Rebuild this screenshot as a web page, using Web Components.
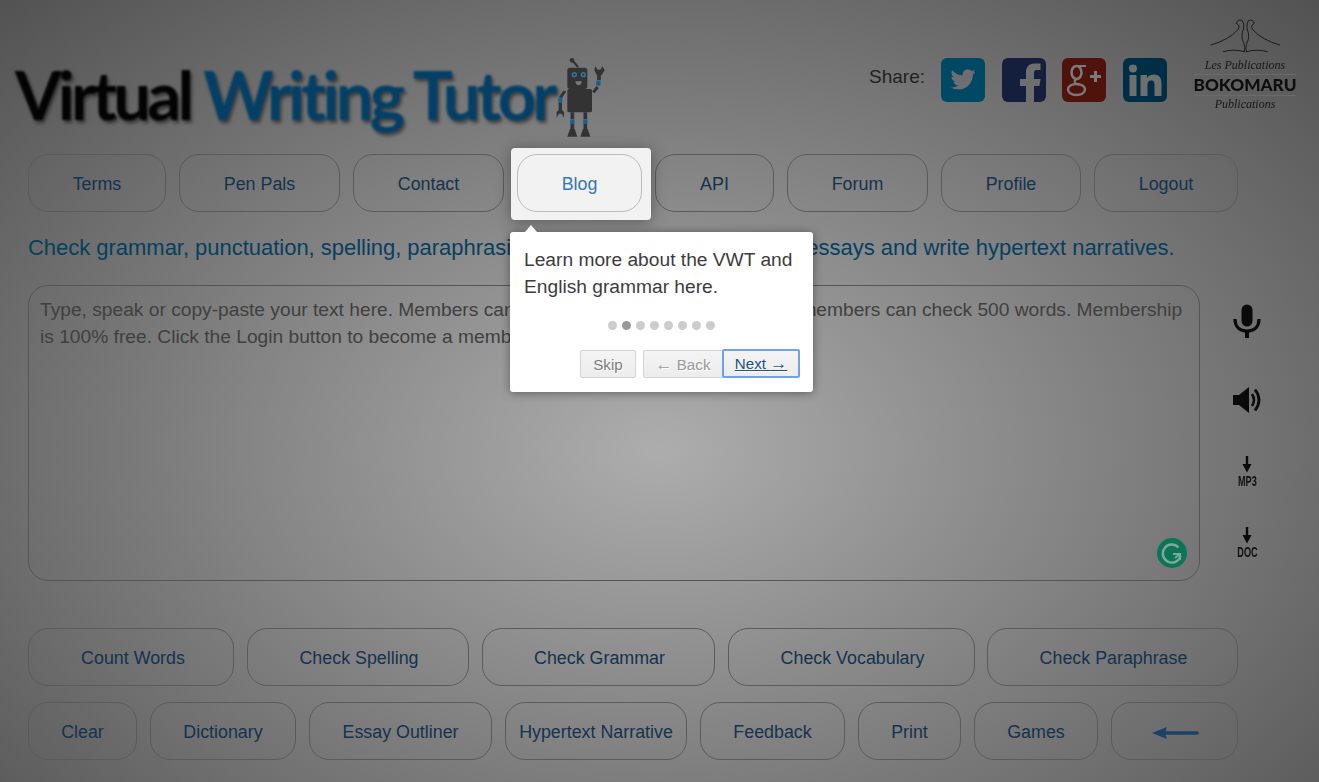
<!DOCTYPE html>
<html lang="en"><head><meta charset="utf-8"><title>Virtual Writing Tutor</title>
<style>
html,body{margin:0;padding:0;height:782px;overflow:hidden}
body{position:relative;width:1319px;font-family:"Liberation Sans",Arial,sans-serif;background:radial-gradient(ellipse 933px 636px at 659px 450px,#adadad 0,#525252 100%)}
.row{display:flex;gap:13px;padding-left:28px}
.gap16{margin-top:16px}
</style></head><body>
<vwt-header></vwt-header>
<div class="row">
<vwt-button style="--w:138px">Terms</vwt-button>
<vwt-button style="--w:161px">Pen Pals</vwt-button>
<vwt-button style="--w:151px">Contact</vwt-button>
<vwt-button style="--w:125px" active>Blog</vwt-button>
<vwt-button style="--w:119px">API</vwt-button>
<vwt-button style="--w:141px">Forum</vwt-button>
<vwt-button style="--w:140px">Profile</vwt-button>
<vwt-button style="--w:144px">Logout</vwt-button>
</div>
<vwt-tagline>Check grammar, punctuation, spelling, paraphrasing and vocabulary use. Study essays and write hypertext narratives.</vwt-tagline>
<vwt-workspace></vwt-workspace>
<div class="row" style="--pl:2px">
<vwt-button style="--w:206px;--pl:4px">Count Words</vwt-button>
<vwt-button style="--w:222px">Check Spelling</vwt-button>
<vwt-button style="--w:233px">Check Grammar</vwt-button>
<vwt-button style="--w:247px">Check Vocabulary</vwt-button>
<vwt-button style="--w:251px;margin-left:-1px">Check Paraphrase</vwt-button>
</div>
<div class="row gap16">
<vwt-button style="--w:109px">Clear</vwt-button>
<vwt-button style="--w:146px">Dictionary</vwt-button>
<vwt-button style="--w:183px">Essay Outliner</vwt-button>
<vwt-button style="--w:182px">Hypertext Narrative</vwt-button>
<vwt-button style="--w:145px">Feedback</vwt-button>
<vwt-button style="--w:103px">Print</vwt-button>
<vwt-button style="--w:124px">Games</vwt-button>
<vwt-button style="--w:127px"><svg width="48" height="16" viewBox="0 0 48 16" style="display:block;margin-top:2px;filter:blur(.4px)" aria-hidden="true"><path d="M13 8H46" stroke="#1c4169" stroke-width="3.500" stroke-linecap="round"/><path d="M1 8L16 2Q13 8 16 14Z" fill="#1c4169"/></svg></vwt-button>
</div>
<vwt-highlight></vwt-highlight>
<vwt-tooltip>Learn more about the VWT and English grammar here.</vwt-tooltip>
<script>
function def(name,html){customElements.define(name,class extends HTMLElement{constructor(){super();this.attachShadow({mode:'open'}).innerHTML=html;}});}

def('vwt-logo',`<style>
:host{display:flex;align-items:flex-start;margin:0 0 0 15px}
.t{font:700 67px/72px Lato,sans-serif;letter-spacing:-3.800px;white-space:nowrap;color:#030303;text-shadow:2px 3px 3px rgba(0,0,0,.45);filter:blur(.9px);margin-top:58px;height:90px;word-spacing:1px}
.b{color:#033f66}
svg{display:block;margin:55px 0 0 -4px;filter:blur(.7px)}
</style><div class="t">Virtual <span class="b">Writing Tutor</span></div>
<svg width="60" height="90" viewBox="0 0 180 270" aria-hidden="true">
<path d="M66 15L84 36" stroke="#333" stroke-width="6"/><circle cx="66" cy="16" r="7" fill="#333"/>
<path d="M52 46Q52 38 60 38H104Q112 38 112 46V94Q112 102 104 102H60Q52 102 52 94Z" fill="#333"/>
<circle cx="73" cy="59" r="8" fill="#35759f"/><circle cx="73" cy="59" r="3.500" fill="#333"/><circle cx="100" cy="59" r="8" fill="#35759f"/><circle cx="100" cy="59" r="3.500" fill="#333"/>
<path d="M76 79H96Q94 91 86 91Q78 91 76 79Z" fill="#777"/>
<rect x="52" y="102" width="74" height="70" rx="5" fill="#333"/>
<path d="M45 108L31 128" stroke="#333" stroke-width="9"/><path d="M31 128V143" stroke="#1b5f8f" stroke-width="12"/><path d="M31 143V168" stroke="#333" stroke-width="10"/>
<path d="M20 188V170L31 162L42 170V188L35 176H27Z" fill="#333"/>
<path d="M130 112L143 96" stroke="#333" stroke-width="9"/><path d="M145 92V78" stroke="#1b5f8f" stroke-width="13"/><path d="M147 76V56" stroke="#333" stroke-width="11"/>
<path d="M136 34L143 44H151L157 34L164 46L155 60H140L133 46Z" fill="#333"/>
<path d="M67 172V192" stroke="#333" stroke-width="11"/><path d="M67 193V207" stroke="#1b5f8f" stroke-width="13"/><path d="M67 207V224" stroke="#333" stroke-width="11"/><path d="M52 245L60 222H74L82 245Z" fill="#333"/>
<path d="M106 172V192" stroke="#333" stroke-width="11"/><path d="M106 193V207" stroke="#1b5f8f" stroke-width="13"/><path d="M106 207V224" stroke="#333" stroke-width="11"/><path d="M91 245L99 222H113L121 245Z" fill="#333"/>
</svg>`);

def('vwt-share',`<style>
:host{display:flex;align-items:flex-start;margin-top:58px;font-size:19px;color:#222}
span{margin:8px 16px 0 0;line-height:22px}
.i{display:block;width:44px;height:44px;border-radius:6px;margin-right:17px;overflow:hidden}
.i:last-child{margin-right:0}
</style><span>Share:</span>
<svg class="i" style="background:#004864" viewBox="0 0 44 44" aria-hidden="true"><g transform="translate(9.500 9) scale(1.04)"><path fill="#6e6e6e" d="M23.953 4.57a10 10 0 01-2.825.775 4.958 4.958 0 002.163-2.723c-.951.555-2.005.959-3.127 1.184a4.92 4.92 0 00-8.384 4.482C7.69 8.095 4.067 6.13 1.64 3.162a4.822 4.822 0 00-.666 2.475c0 1.71.87 3.213 2.188 4.096a4.904 4.904 0 01-2.228-.616v.06a4.923 4.923 0 003.946 4.827 4.996 4.996 0 01-2.212.085 4.936 4.936 0 004.604 3.417 9.867 9.867 0 01-6.102 2.105c-.39 0-.779-.023-1.17-.067a13.995 13.995 0 007.557 2.209c9.053 0 13.998-7.496 13.998-13.985 0-.21 0-.42-.015-.63A9.935 9.935 0 0024 4.59z"/></g></svg>
<svg class="i" style="background:#141f3d;margin-right:16px" viewBox="0 0 44 44" aria-hidden="true"><path fill="#6e6e6e" d="M24 44V28H18V21H24V14C24 8 28 5.500 33 5.500H38.500V12H35C32.500 12 32 13 32 15V21H38.500L37.500 28H32V44Z"/></svg>
<svg class="i" style="background:#4f130b" viewBox="0 0 44 44" aria-hidden="true"><g fill="none" stroke="#7a7a7a"><ellipse cx="14.500" cy="14.500" rx="5" ry="6.500" stroke-width="2.600"/><ellipse cx="14.500" cy="31.500" rx="8.500" ry="5.500" stroke-width="2.400"/><path d="M15 21C11 23 12 25 17 27" stroke-width="2"/><path d="M15 8H24" stroke-width="2"/></g><path d="M33.500 13V24M28 18.500H39" stroke="#7a7a7a" stroke-width="3"/></svg>
<svg class="i" style="background:#002e47" viewBox="0 0 44 44" aria-hidden="true"><g fill="#6e6e6e"><circle cx="10" cy="10.500" r="4"/><rect x="6.500" y="17" width="7" height="21"/><path d="M17.500 17H24V20C25.500 17.500 28 16.500 31 16.500C36.500 16.500 38.500 20 38.500 25.500V38H31.500V27C31.500 24.500 31 22.500 28 22.500C25.500 22.500 24.500 24.500 24.500 27V38H17.500Z"/></g></svg>`);

def('vwt-publisher',`<style>
:host{display:flex;flex-direction:column;align-items:center;width:104px;margin:15px 0 0 26px;color:#141414;filter:blur(.4px)}
svg{display:block;margin-bottom:5px}
.s{font:italic 12px/13px "Liberation Serif",serif;white-space:nowrap;color:#161616}
.b{font:900 17.200px/20px Lato,sans-serif;letter-spacing:0;border-top:1px solid #6a6a6a;border-bottom:1px solid #6a6a6a;margin:2px 0;white-space:nowrap;color:#0d0d0d}
</style>
<svg width="80" height="39" viewBox="60 17 240 117" aria-hidden="true"><g fill="none" stroke="#101010" stroke-width="2.500" stroke-linecap="round"><path d="M78 107Q130 92 158 62Q168 48 154 42Q158 28 172 34Q178 42 176 58Q166 82 176 100Q182 115 178 127"/><path d="M115 127Q145 118 178 127"/></g><g transform="matrix(-1 0 0 1 362 0)" fill="none" stroke="#101010" stroke-width="2.500" stroke-linecap="round"><path d="M78 107Q130 92 158 62Q168 48 154 42Q158 28 172 34Q178 42 176 58Q166 82 176 100Q182 115 178 127"/><path d="M115 127Q145 118 178 127"/></g></svg>
<div class="s">Les Publications</div><div class="b">BOKOMARU</div><div class="s">Publications</div>`);

def('vwt-header',`<style>
:host{display:flex;height:154px;justify-content:space-between}
div{display:flex}
</style><vwt-logo></vwt-logo><div style="margin-right:22px"><vwt-share></vwt-share><vwt-publisher></vwt-publisher></div>`);

def('vwt-button',`<style>
:host{display:flex;align-items:center;justify-content:center;box-sizing:border-box;width:var(--w);height:58px;flex:none;border:1px solid #5b5b5b;border-radius:20px;padding-top:2px;padding-left:var(--pl,0);color:#15324f;font-size:17.850px;white-space:nowrap}
:host([active]){position:relative;z-index:2;background:#f2f2f2;border-color:#bcbcbc;color:#3478b4}
</style><slot></slot>`);

def('vwt-tagline',`<style>
:host{display:block;margin:21px 0 22px 28px;font-size:22px;letter-spacing:-.025px;line-height:30px;color:#063f60;white-space:nowrap}
</style><slot></slot>`);

def('vwt-editor',`<style>
:host{display:block;position:relative;box-sizing:border-box;width:1172px;height:296px;border:1px solid #555;border-radius:20px;padding:10px 11px;font-size:19.200px;line-height:27px;color:#404040;white-space:nowrap}
svg{position:absolute;right:12px;bottom:12px}
</style>Type, speak or copy-paste your text here. Members can check 900 words at a time.&nbsp; Non-members can check 500 words. Membership<br>is 100% free. Click the Login button to become a member.
<svg width="30" height="30" viewBox="0 0 30 30" aria-hidden="true"><circle cx="15" cy="15" r="15" fill="#0b7558"/><path d="M21.500 9.500A9 9 0 1 0 23.500 18" fill="none" stroke="#7fa89b" stroke-width="2.400"/><path d="M23 22V16H16M23 16L18 20" fill="none" stroke="#7fa89b" stroke-width="2"/></svg>`);

def('vwt-side-tools',`<style>
:host{display:flex;flex-direction:column;align-items:center;width:94px;color:#111}
.c{display:flex;flex-direction:column;align-items:center;width:100%}
.dl{font:700 13px/11px "Liberation Sans",sans-serif;transform:scale(.7,1.15);filter:blur(.3px);margin-top:2px}
svg{display:block}
</style>
<div class="c" style="margin-top:19px"><svg width="28" height="34" viewBox="0 0 28 34" aria-hidden="true"><rect x="8.500" y="0.500" width="11" height="22" rx="5.500" fill="#0a0a0a"/><path d="M2 15C2 23 7 27 14 27C21 27 26 23 26 15" fill="none" stroke="#0a0a0a" stroke-width="3.200"/><path d="M14 27V34" stroke="#0a0a0a" stroke-width="4"/></svg></div>
<div class="c" style="margin-top:48px"><svg width="28" height="28" viewBox="0 0 28 28" aria-hidden="true"><path d="M0 9H6L16 1V27L6 19H0Z" fill="#0a0a0a"/><path d="M19 8Q23 14 19 20" fill="none" stroke="#0a0a0a" stroke-width="2.500"/><path d="M22 3.500Q30 14 22 24.500" fill="none" stroke="#0a0a0a" stroke-width="2.800"/></svg></div>
<div class="c" style="margin-top:42px"><svg width="10" height="17" viewBox="0 0 10 17" aria-hidden="true"><path d="M5 0V10" stroke="#0a0a0a" stroke-width="2.400"/><path d="M0.500 8H9.500L5 16.500Z" fill="#0a0a0a"/></svg><div class="dl">MP3</div></div>
<div class="c" style="margin-top:41px"><svg width="10" height="17" viewBox="0 0 10 17" aria-hidden="true"><path d="M5 0V10" stroke="#0a0a0a" stroke-width="2.400"/><path d="M0.500 8H9.500L5 16.500Z" fill="#0a0a0a"/></svg><div class="dl">DOC</div></div>`);

def('vwt-workspace',`<style>
:host{display:flex;margin:0 0 47px 28px}
</style><vwt-editor></vwt-editor><vwt-side-tools></vwt-side-tools>`);

def('vwt-highlight',`<style>
:host{position:absolute;z-index:1;left:511px;top:148px;width:140px;height:72px;background:#f2f2f2;border-radius:4px;box-shadow:0 2px 15px rgba(0,0,0,.35)}
</style>`);

def('vwt-tooltip',`<style>
:host{position:absolute;z-index:3;left:510px;top:232px;width:303px;height:160px;box-sizing:border-box;background:#fff;border-radius:3px;box-shadow:0 1px 10px rgba(0,0,0,.4);color:#3c3c3c;padding:14px 14px 0;display:flex;flex-direction:column}
.arrow{position:absolute;left:15px;top:-7px;width:0;height:0;border:6.500px solid transparent;border-top:0;border-bottom:7px solid #fff}
.text{font-size:19.200px;line-height:27px}
.dots{display:flex;justify-content:center;gap:5px;margin-top:21px}
.dots i{display:block;width:9px;height:9px;border-radius:50%;background:#ccc}
.dots i.on{background:#999}
.btns{display:flex;justify-content:flex-end;margin-top:20px;margin-right:-1px;font-size:15.200px}
.btn{box-sizing:border-box;height:28px;display:flex;align-items:center;justify-content:center;border:1px solid #d3d3d3;border-radius:2px;background:linear-gradient(#f4f4f4,#ececec);text-shadow:1px 1px 0 #fff;white-space:pre}
.skip{width:56px;color:#7d7d7d;margin-right:7px}
.back{width:80px;color:#9a9a9a;border-radius:2px 0 0 2px}
.next{width:78px;color:#21507f;text-decoration:underline;border:2px solid #6ea2ee;margin-left:-1px;height:29px;margin-top:-1px}
.ar{font-size:17px;line-height:0}
</style><div class="arrow"></div><div class="text"><slot></slot></div>
<div class="dots"><i></i><i class="on"></i><i></i><i></i><i></i><i></i><i></i><i></i></div>
<div class="btns"><div class="btn skip">Skip</div><div class="btn back"><span><span class="ar">←</span> Back</span></div><div class="btn next"><span>Next <span class="ar">→</span></span></div></div>`);
</script>
</body></html>
